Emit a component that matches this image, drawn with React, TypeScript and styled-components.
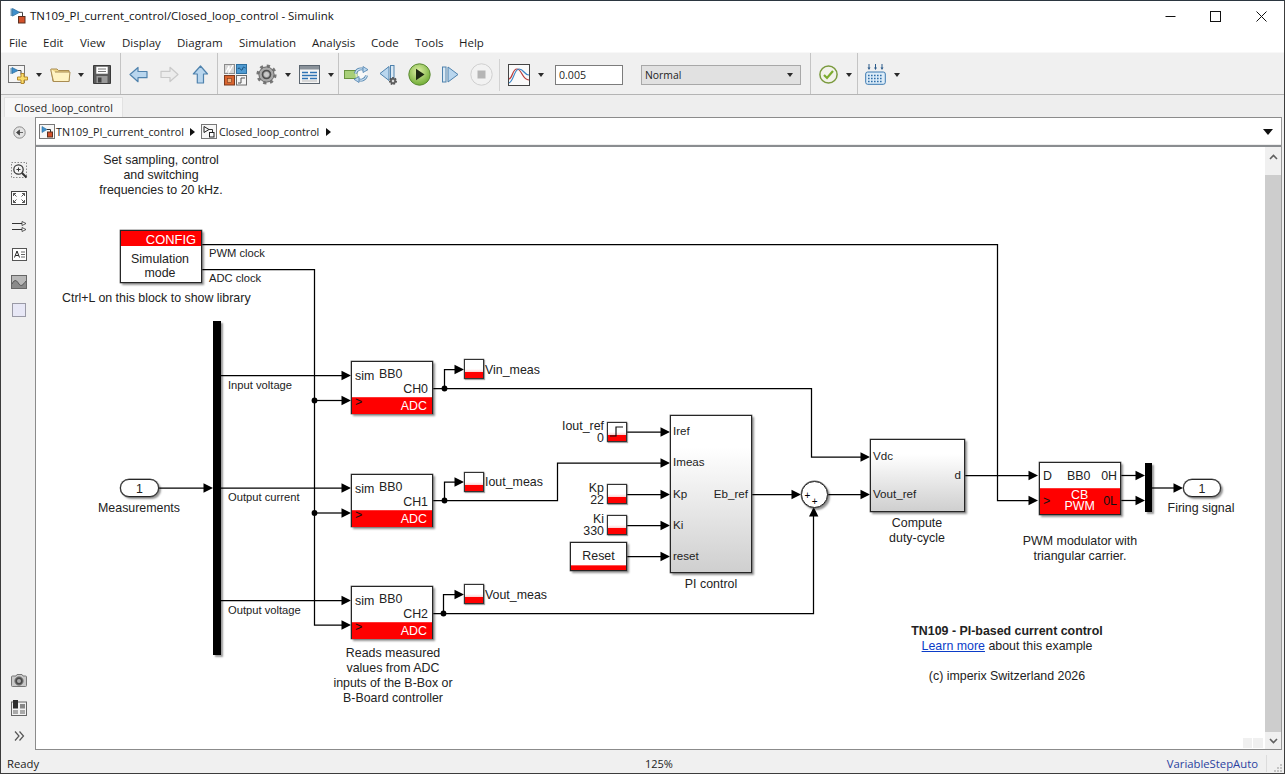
import React from "react";
import styled, { createGlobalStyle, css } from "styled-components";

const OX = 36;
const OY = 147;

const Global = createGlobalStyle`
  html, body { margin: 0; padding: 0; background: #fff; }
  * { box-sizing: border-box; }
`;

const uiFont = `"Open Sans", "Noto Sans", sans-serif`;
const diagramFont = `"Liberation Sans", Arial, sans-serif`;

const Window = styled.div`
  width: 1285px;
  height: 774px;
  display: flex;
  flex-direction: column;
  overflow: hidden;
  background: #f0f0f0;
  border: 1px solid #3c3c3c;
  border-top-color: #2b3640;
  font-family: ${uiFont};
  color: #1a1a1a;
`;

const TitleBar = styled.div`
  height: 30px;
  flex: none;
  display: flex;
  align-items: center;
  background: #fff;
  padding-left: 9px;
`;
const TitleText = styled.span`
  font-size: 11.44px;
  margin-left: 4px;
  margin-top: -1px;
  color: #111;
  white-space: nowrap;
`;
const WinControls = styled.div`
  margin-left: auto;
  display: flex;
  height: 100%;
`;
const WinControl = styled.div`
  width: 45.5px;
  display: flex;
  align-items: center;
  justify-content: center;
`;

const MenuBar = styled.div`
  height: 21px;
  flex: none;
  display: flex;
  align-items: center;
  background: #fff;
  padding: 1px 0 0 8px;
`;
const MenuItem = styled.span<{ $w: number }>`
  width: ${(p) => p.$w}px;
  font-size: 11.5px;
  color: #1c1c1c;
`;

const ToolBar = styled.div`
  height: 43px;
  flex: none;
  display: flex;
  align-items: center;
  background: #f0f0f0;
  border-top: 1px solid #f8f8f8;
  border-bottom: 1px solid #b4b4b4;
`;
const ToolGroup = styled.div<{ $w: number; $open?: boolean }>`
  width: ${(p) => p.$w}px;
  height: 100%;
  flex: none;
  display: flex;
  align-items: center;
  padding-top: 2px;
  border-right: 1px solid ${(p) => (p.$open ? "transparent" : "#c4c4c4")};
`;
const ToolSlot = styled.span<{ $ml: number }>`
  display: inline-flex;
  flex: none;
  margin-left: ${(p) => p.$ml}px;
`;
const Caret = styled.span<{ $ml?: number }>`
  flex: none;
  width: 0;
  height: 0;
  margin-left: ${(p) => p.$ml ?? 8}px;
  border-left: 3.5px solid transparent;
  border-right: 3.5px solid transparent;
  border-top: 4px solid #2a2a2a;
`;
const InnerDivider = styled.span<{ $ml: number }>`
  flex: none;
  width: 1px;
  height: 32px;
  margin-left: ${(p) => p.$ml}px;
  background: #d2d2d2;
`;
const StepInput = styled.div`
  flex: none;
  width: 68px;
  height: 20px;
  margin-left: 11px;
  padding-left: 3px;
  border: 1px solid #7c7c7c;
  background: #fff;
  font-size: 10.6px;
  line-height: 18px;
  color: #222;
`;
const ModeCombo = styled.div`
  flex: none;
  width: 160px;
  height: 20px;
  margin-left: 18px;
  padding: 0 7px 0 3px;
  display: flex;
  align-items: center;
  justify-content: space-between;
  border: 1px solid #a8a8a8;
  background: #e1e1e1;
  font-size: 10.4px;
  color: #222;
`;

const TabStrip = styled.div`
  height: 22px;
  flex: none;
  padding: 2px 0 0 3px;
  background: #eeeeee;
`;
const Tab = styled.div`
  width: 119px;
  height: 20px;
  background: #f7f7f7;
  border: 1px solid #e2e2e2;
  border-bottom: none;
  text-align: center;
  font-size: 10.5px;
  line-height: 20px;
  color: #222;
`;

const Main = styled.div`
  flex: 1;
  min-height: 0;
  display: flex;
  background: #f0f0f0;
`;
const SideBar = styled.div`
  width: 34px;
  flex: none;
  display: flex;
  flex-direction: column;
  padding-top: 1px;
`;
const SideButton = styled.div<{ $mt?: string }>`
  height: 28px;
  flex: none;
  display: flex;
  align-items: center;
  justify-content: center;
  margin-top: ${(p) => p.$mt ?? "0"};
  padding-left: 2px;
`;
const Frame = styled.div`
  flex: 1;
  min-width: 0;
  margin-right: 2px;
  display: flex;
  flex-direction: column;
  border: 1px solid #8b8b8b;
  border-right-color: #9a9a9a;
  background: #fff;
`;
const Breadcrumb = styled.div`
  height: 29px;
  flex: none;
  display: flex;
  align-items: center;
  padding: 0 4px 0 3px;
  background: #fff;
  border-bottom: 2px solid #8a8d90;
  box-shadow: inset 0 -1px 0 #eeeeee;
`;
const CrumbText = styled.span<{ $ml: number }>`
  font-size: 10.7px;
  color: #222;
  margin-left: ${(p) => p.$ml}px;
  white-space: nowrap;
`;
const CrumbArrow = styled.span<{ $ml: number }>`
  flex: none;
  width: 0;
  height: 0;
  margin-left: ${(p) => p.$ml}px;
  border-top: 4.5px solid transparent;
  border-bottom: 4.5px solid transparent;
  border-left: 5px solid #111;
`;
const CrumbMenu = styled.span`
  flex: none;
  margin-left: auto;
  margin-right: 4px;
  width: 0;
  height: 0;
  border-left: 5px solid transparent;
  border-right: 5px solid transparent;
  border-top: 6px solid #111;
`;

const Workspace = styled.div`
  flex: 1;
  min-height: 0;
  display: flex;
`;
const Canvas = styled.div`
  position: relative;
  flex: 1;
  min-width: 0;
  overflow: hidden;
  background: #fff;
  font-family: ${diagramFont};
  color: #222;
`;
const Wires = styled.svg`
  position: absolute;
  inset: 0;
  width: 100%;
  height: 100%;
`;
const ScrollBar = styled.div`
  width: 16px;
  flex: none;
  display: flex;
  flex-direction: column;
  background: #f0f0f0;
`;
const ScrollButton = styled.div<{ $h: number; $pb?: number }>`
  height: ${(p) => p.$h}px;
  padding-bottom: ${(p) => p.$pb ?? 0}px;
  flex: none;
  display: flex;
  align-items: center;
  justify-content: center;
`;
const ScrollThumb = styled.div`
  flex: 1;
  background: #cdcdcd;
`;
const HScrollGhost = styled.div<{ $x: number; $y: number; $w: number; $h: number }>`
  position: absolute;
  left: ${(p) => p.$x - OX}px;
  top: ${(p) => p.$y - OY}px;
  width: ${(p) => p.$w}px;
  height: ${(p) => p.$h}px;
  background: #f0f0f0;
`;

const StatusBar = styled.div`
  height: 23px;
  flex: none;
  position: relative;
  display: flex;
  align-items: center;
  padding: 3px 0 0 6px;
  font-size: 11.3px;
  color: #222;
  background: #f0f0f0;
`;
const StatusZoom = styled.span`
  position: absolute;
  left: 644px;
  font-size: 11px;
`;
const StatusSolver = styled.span`
  margin-left: auto;
  margin-right: 8px;
  color: #2a3f9f;
  font-size: 11.3px;
`;
const StatusCell = styled.span`
  width: 18px;
  height: 17px;
  display: flex;
  align-items: flex-end;
  justify-content: flex-end;
  border-left: 1px solid #dcdcdc;
  padding: 0 2px 0 0;
`;

/* ---------- diagram ---------- */
const placed = css<{ $x: number; $y: number; $w?: number; $h?: number }>`
  position: absolute;
  left: ${(p) => p.$x - OX}px;
  top: ${(p) => p.$y - OY}px;
  ${(p) => (p.$w !== undefined ? `width: ${p.$w}px;` : "")}
  ${(p) => (p.$h !== undefined ? `height: ${p.$h}px;` : "")}
`;
const blockEdge = css`
  border: 1px solid #262626;
  box-shadow: 0 0 0 0.4px #666, 2px 2px 2px rgba(0, 0, 0, 0.42);
`;

type Anchor = "start" | "middle" | "end";
const Label = styled.div<{ $x: number; $y: number; $anchor?: Anchor; $small?: boolean; $bold?: boolean; $tight?: boolean }>`
  ${placed}
  font-size: ${(p) => (p.$small ? 11.2 : 12.4)}px;
  line-height: ${(p) => (p.$tight ? 11.6 : p.$small ? 13 : 15)}px;
  font-weight: ${(p) => (p.$bold ? 700 : 400)};
  white-space: pre;
  text-align: ${(p) => (p.$anchor === "middle" ? "center" : p.$anchor === "end" ? "right" : "left")};
  transform: translateX(${(p) => (p.$anchor === "middle" ? "-50%" : p.$anchor === "end" ? "-100%" : "0")});
`;
const LearnLink = styled.a`
  color: #0b3cc8;
  text-decoration: underline;
`;

const ConfigBlock = styled.div`
  ${placed}
  ${blockEdge}
  display: flex;
  flex-direction: column;
  background: #fff;
  font-size: 12.4px;
`;
const ConfigHead = styled.div`
  height: 15px;
  flex: none;
  background: #ff0000;
  color: #fff;
  text-align: right;
  padding-right: 5px;
  font-size: 12.9px;
  line-height: 17px;
`;
const ConfigBody = styled.div`
  flex: 1;
  text-align: center;
  padding: 6px 2px 0 0;
  line-height: 14px;
  color: #222;
`;

const AdcBlock = styled.div`
  ${placed}
  ${blockEdge}
  display: flex;
  flex-direction: column;
  background: #fff;
  font-size: 12.4px;
`;
const AdcTop = styled.div`
  height: 35px;
  flex: none;
  display: grid;
  grid-template-columns: 24px 1fr;
  grid-template-rows: 15px 14px;
  padding: 5px 4px 0 3px;
  line-height: 14px;
`;
const AdcSim = styled.span`
  padding-top: 2px;
`;
const AdcBoard = styled.span`
  padding-top: 0;
`;
const AdcChannel = styled.span`
  grid-column: 1 / 3;
  text-align: right;
`;
const AdcBottom = styled.div`
  flex: 1;
  display: flex;
  justify-content: space-between;
  padding: 1px 5px 0 3px;
  background: linear-gradient(#ff5050 0, #ff0000 1.5px);
  line-height: 16px;
  color: #fff;
`;
const ClockMark = styled.span`
  color: #111;
  font-size: 12.4px;
  line-height: 9px;
`;

const Display = styled.div`
  ${placed}
  width: 20px;
  height: 20px;
  border: 1px solid #333;
  box-shadow: 0 0 0 0.3px #777, 1px 1px 1px rgba(0, 0, 0, 0.3);
  background: linear-gradient(#fff 0, #fff 50%, #fcd6d6 65%, #ff0000 68%, #ff0000 100%);
`;
const StepGlyph = styled.svg`
  display: block;
  width: 18px;
  height: 18px;
`;
const ResetButton = styled.div`
  ${placed}
  ${blockEdge}
  text-align: center;
  font-size: 12.4px;
  line-height: 26px;
  background: linear-gradient(#fff 0, #fff 82%, #ff0000 84%, #ff0000 100%);
`;
const Subsystem = styled.div`
  ${placed}
  ${blockEdge}
  background: linear-gradient(#ffffff 20%, #cfcfcf 100%);
  font-size: 12.4px;
`;
const PortText = styled.span<{ $y: number; $right?: boolean }>`
  position: absolute;
  top: ${(p) => p.$y}px;
  ${(p) => (p.$right ? "right: 3px;" : "left: 2px;")}
  font-size: 11.6px;
  line-height: 14px;
  white-space: nowrap;
`;
const SumBlock = styled.div`
  ${placed}
  ${blockEdge}
  width: 27px;
  height: 27px;
  border-radius: 50%;
  background: #fff;
`;
const SumSign = styled.span<{ $l: number; $t: number }>`
  position: absolute;
  left: ${(p) => p.$l}px;
  top: ${(p) => p.$t}px;
  font-size: 10px;
  line-height: 9px;
  color: #000;
`;
const MuxBar = styled.div`
  ${placed}
  background: #000;
  box-shadow: 2px 2px 2px rgba(0, 0, 0, 0.4);
`;
const Port = styled.div`
  ${placed}
  ${blockEdge}
  border-radius: 9px;
  background: #fff;
  text-align: center;
  font-size: 12.4px;
  line-height: 18px;
`;
const PwmBlock = styled.div`
  ${placed}
  ${blockEdge}
  display: flex;
  flex-direction: column;
  background: #fff;
  font-size: 12.4px;
`;
const PwmTop = styled.div`
  height: 25px;
  flex: none;
  display: flex;
  align-items: center;
  padding: 1px 3px 0 3px;
`;
const PwmBoard = styled.span`
  margin-left: 15px;
`;
const PwmOut = styled.span`
  margin-left: auto;
`;
const PwmBottom = styled.div`
  flex: 1;
  display: flex;
  align-items: center;
  padding: 0 3px 0 3px;
  background: linear-gradient(#ff5050 0, #ff0000 1.5px);
  color: #fff;
`;
const PwmClock = styled.span`
  width: 13px;
  flex: none;
  font-size: 12.4px;
  color: #111;
`;
const PwmTitle = styled.span`
  flex: 1;
  text-align: center;
  line-height: 11px;
  white-space: pre;
`;
const PwmLow = styled.span`
  flex: none;
  color: #111;
`;

/* ---------- icons ---------- */
const ModelGlyph = () => (
  <svg width="16" height="17" viewBox="0 0 16 17">
    <path d="M1.2 0.5v7.5" stroke="#2c6f9f" strokeWidth="1" />
    <path d="M2.5 0.5l7 3.8-7 3.8z" fill="#3f8fcc" stroke="#2c6f9f" strokeWidth="0.8" />
    <path d="M9 4.3h3.5V9" fill="none" stroke="#444" strokeWidth="1" />
    <rect x="8.5" y="8.5" width="6.5" height="6.5" fill="#d4512a" stroke="#5b3020" />
  </svg>
);
const CrumbModel = () => (
  <svg width="16" height="15" viewBox="0 0 16 15">
    <rect x="0.5" y="0.5" width="15" height="14" fill="#f7f7f7" stroke="#777" />
    <path d="M3 2.5l5 3-5 3z" fill="#3f8fcc" stroke="#2c6f9f" strokeWidth="0.6" />
    <path d="M8 5.5h3.5v3" fill="none" stroke="#333" />
    <rect x="8.5" y="8" width="5" height="5" fill="#d4512a" stroke="#5b3020" />
  </svg>
);
const CrumbSub = () => (
  <svg width="16" height="15" viewBox="0 0 16 15">
    <rect x="0.5" y="0.5" width="15" height="14" fill="#f7f7f7" stroke="#777" />
    <path d="M3 2.5l5 3-5 3z" fill="none" stroke="#222" />
    <path d="M8 5.5h3.5v3" fill="none" stroke="#333" />
    <rect x="8.5" y="8.5" width="4.5" height="4.5" fill="#fff" stroke="#222" />
  </svg>
);
const NewIcon = () => (
  <svg width="21" height="21" viewBox="0 0 21 21">
    <rect x="0.5" y="1.5" width="16" height="17" fill="#f5f5f5" stroke="#757575" />
    <path d="M3 4v6M4 3.5l6 3-6 3z" fill="#3f8fcc" stroke="#2c6f9f" strokeWidth="0.8" />
    <path d="M10 6.5h3v4" fill="none" stroke="#444" />
    <path d="M13 9.5h3v3.5h3.5v3H16v3.5h-3V16H9.5v-3H13z" fill="#f9dc6a" stroke="#b7892a" />
  </svg>
);
const FolderIcon = () => (
  <svg width="21" height="16" viewBox="0 0 21 16">
    <path d="M1 2h6l1.5 1.5H19V14.5H3z" fill="#f0d88a" stroke="#a98c52" />
    <path d="M1 2v2l2.5 10.5H19L20 5H5" fill="#fff3c2" stroke="#a98c52" />
  </svg>
);
const SaveIcon = () => (
  <svg width="18" height="19" viewBox="0 0 18 19">
    <path d="M0.5 0.5h17v18h-17z" fill="#5a5a5a" stroke="#3a3a3a" />
    <rect x="3" y="1.5" width="12" height="7.5" fill="#fff" stroke="#6a6a6a" strokeWidth="0.6" />
    <path d="M5 4h8M5 6.5h8" stroke="#777" />
    <rect x="3.5" y="11" width="11" height="7" fill="#9a9a9a" />
    <rect x="5" y="12.5" width="3.5" height="5" fill="#444" />
  </svg>
);
const ArrowIcon = ({ dir, off }: { dir: "left" | "right" | "up"; off?: boolean }) => {
  const fill = off ? "#ececec" : "#b9d6ee";
  const stroke = off ? "#c9c9c9" : "#4f82ad";
  const r = dir === "left" ? 0 : dir === "right" ? 180 : 90;
  return (
    <svg width="19" height="19" viewBox="0 0 19 19">
      <path
        transform={`rotate(${r} 9.5 9.5)`}
        d="M1 9.5L9 2.5v4h9v6.2H9v4z"
        fill={fill}
        stroke={stroke}
        strokeWidth="1.2"
        strokeLinejoin="round"
      />
    </svg>
  );
};
const LibraryIcon = () => (
  <svg width="23" height="23" viewBox="0 0 23 23">
    <rect x="0.5" y="1.5" width="10" height="9" fill="#d6d6d6" stroke="#8a8a8a" />
    <path d="M2 9L5 3v6l4-7" fill="none" stroke="#fff" strokeWidth="1.2" />
    <rect x="12.5" y="1.5" width="10" height="9" fill="#4f9ad1" stroke="#2d6f9f" />
    <path d="M14 6c1.5-4 3 4 4.5 0s1.5-1 3-1" fill="none" stroke="#174f7c" />
    <rect x="0.5" y="12.5" width="10" height="9.5" fill="#d9642f" stroke="#7b3a1f" />
    <rect x="3.5" y="15.5" width="4" height="4" fill="#f0b07a" stroke="#7b3a1f" strokeWidth="0.6" />
    <rect x="12.5" y="12.5" width="10" height="9.5" fill="#f5f5f5" stroke="#6a6a6a" />
    <path d="M14 20h3v-5h4" fill="none" stroke="#555" />
  </svg>
);
const GearIcon = () => (
  <svg width="21" height="21" viewBox="0 0 21 21">
    <circle cx="10.5" cy="10.5" r="8.6" fill="none" stroke="#777" strokeWidth="3" strokeDasharray="3.2 3.55" />
    <circle cx="10.5" cy="10.5" r="7.6" fill="#a9a9a9" stroke="#666" />
    <circle cx="10.5" cy="10.5" r="4.8" fill="#4f4f4f" />
    <circle cx="10.5" cy="10.5" r="3" fill="#c9c9c9" stroke="#888" strokeWidth="0.6" />
  </svg>
);
const ExplorerIcon = () => (
  <svg width="21" height="19" viewBox="0 0 21 19">
    <rect x="0.5" y="0.5" width="20" height="18" fill="#f4f4f4" stroke="#5c6670" />
    <rect x="1" y="1" width="19" height="3.5" fill="#8a929a" />
    <path d="M3 7.5h6M11 7.5h7M3 10.5h15M3 13.5h6M11 13.5h7" stroke="#2f73b4" strokeWidth="1.4" />
    <path d="M3 16h15" stroke="#bbb" />
  </svg>
);
const LoopIcon = () => (
  <svg width="25" height="19" viewBox="0 0 25 19">
    <rect x="0.5" y="5.5" width="13" height="8" fill="#a8cf78" stroke="#6a9440" />
    <circle cx="17" cy="9.5" r="5.8" fill="#fff" fillOpacity="0.55" />
    <path d="M11.5 8.5a5.8 5.8 0 0 1 9.5-3.2" fill="none" stroke="#4f82ad" strokeWidth="2.8" />
    <path d="M22.5 10.5a5.8 5.8 0 0 1-9.5 3.2" fill="none" stroke="#4f82ad" strokeWidth="2.8" />
    <path d="M11.5 8.5a5.8 5.8 0 0 1 9.5-3.2" fill="none" stroke="#cfe3f3" strokeWidth="1.2" />
    <path d="M22.5 10.5a5.8 5.8 0 0 1-9.5 3.2" fill="none" stroke="#cfe3f3" strokeWidth="1.2" />
    <path d="M19 1.5l5 3.2-5 2.8zM15 17.5l-5-3.2 5-2.8z" fill="#b9d6ee" stroke="#4f82ad" strokeWidth="0.8" />
  </svg>
);
const StepBackIcon = () => (
  <svg width="19" height="22" viewBox="0 0 19 22">
    <path d="M1 9.5L10 2.5v14z" fill="#b9d6ee" stroke="#4f82ad" strokeLinejoin="round" />
    <rect x="11.5" y="1.5" width="3.5" height="13" fill="#dbe9f4" stroke="#4f82ad" />
    <circle cx="14" cy="17" r="3" fill="#666" stroke="#555" strokeWidth="2" strokeDasharray="1.6 1" />
    <circle cx="14" cy="17" r="1.2" fill="#ddd" />
  </svg>
);
const PlayIcon = () => (
  <svg width="23" height="23" viewBox="0 0 23 23">
    <defs>
      <radialGradient id="pg" cx="45%" cy="35%" r="70%">
        <stop offset="0" stopColor="#dff0a8" />
        <stop offset="1" stopColor="#68a82c" />
      </radialGradient>
    </defs>
    <circle cx="11.5" cy="11.5" r="10.7" fill="url(#pg)" stroke="#5c8a35" />
    <path d="M8 5.8l8.5 5.7-8.5 5.7z" fill="#1e2a14" />
  </svg>
);
const StepForwardIcon = () => (
  <svg width="17" height="17" viewBox="0 0 17 17">
    <rect x="0.5" y="1" width="3.5" height="15" fill="#dbe9f4" stroke="#4f82ad" />
    <path d="M6 1l10 7.5L6 16z" fill="#b9d6ee" stroke="#4f82ad" strokeLinejoin="round" />
  </svg>
);
const StopIcon = () => (
  <svg width="23" height="23" viewBox="0 0 23 23">
    <circle cx="11.5" cy="11.5" r="10.7" fill="#f2f2f2" stroke="#cfcfcf" />
    <rect x="7.5" y="7.5" width="8" height="8" fill="#b5b5b5" />
  </svg>
);
const ScopeIcon = () => (
  <svg width="23" height="22" viewBox="0 0 23 22">
    <rect x="0.5" y="0.5" width="21" height="21" fill="#fafafa" stroke="#444" />
    <path d="M1 15c4-1 3-10 8-10s5 11 12 11" fill="none" stroke="#b83a3a" strokeWidth="1.2" />
    <path d="M1 19c5-2 5-14 10-14s5 6 10 6" fill="none" stroke="#3b84c4" strokeWidth="1.2" />
  </svg>
);
const CheckIcon = () => (
  <svg width="19" height="19" viewBox="0 0 19 19">
    <circle cx="9.5" cy="9.5" r="8.6" fill="#f2f2ea" stroke="#7a9a3e" strokeWidth="1.5" />
    <path d="M5 10l3 3 6-7" fill="none" stroke="#7cac2e" strokeWidth="2.2" />
  </svg>
);
const KeyGridIcon = () => (
  <svg width="21" height="21" viewBox="0 0 21 21">
    <path d="M4 0v4M10.5 0v4M17 0v4" stroke="#2a5a8a" />
    <path d="M2.5 3.5h3L4 6zM9 3.5h3L10.5 6zM15.5 3.5h3L17 6z" fill="#2a5a8a" />
    <rect x="0.7" y="8" width="19.6" height="12.3" rx="2" fill="#dcecf8" stroke="#3a78b0" />
    <path d="M3 11.5h15M3 14.5h15M3 17.5h15" stroke="#2f6ea8" strokeWidth="1.5" strokeDasharray="1.6 1.4" />
  </svg>
);
const BackCircle = () => (
  <svg width="13" height="13" viewBox="0 0 13 13">
    <circle cx="6.5" cy="6.5" r="5.7" fill="#e4e4e4" stroke="#8a8a8a" />
    <path d="M10 6.5H6M6.5 4L3.5 6.5 6.5 9z" fill="#444" stroke="#444" strokeWidth="0.8" />
  </svg>
);
const ZoomIcon = () => (
  <svg width="17" height="17" viewBox="0 0 17 17">
    <rect x="0.5" y="0.5" width="15" height="15" fill="none" stroke="#888" strokeDasharray="1.5 1.5" />
    <circle cx="7.5" cy="7.5" r="4.7" fill="#f4f4f4" stroke="#333" strokeWidth="1.2" />
    <path d="M5.5 7.5h4M7.5 5.5v4" stroke="#333" />
    <path d="M11 11l4.5 4.5" stroke="#333" strokeWidth="2" />
  </svg>
);
const FitIcon = () => (
  <svg width="16" height="14" viewBox="0 0 16 14">
    <rect x="0.5" y="0.5" width="15" height="13" fill="#fff" stroke="#444" />
    <path d="M2.5 2.5l3 3M2.5 2.5h2.5M2.5 2.5V5M13.5 2.5l-3 3M13.5 2.5H11M13.5 2.5V5M2.5 11.5l3-3M2.5 11.5H5M2.5 11.5V9M13.5 11.5l-3-3M13.5 11.5H11M13.5 11.5V9" stroke="#444" fill="none" strokeWidth="0.9" />
  </svg>
);
const RouteIcon = () => (
  <svg width="15" height="11" viewBox="0 0 15 11">
    <path d="M0 2.5h10M0 8.5h10" stroke="#333" />
    <path d="M10 0.5l4 2-4 2zM10 6.5l4 2-4 2z" fill="#fff" stroke="#333" strokeWidth="0.8" />
  </svg>
);
const AnnotIcon = () => (
  <svg width="15" height="13" viewBox="0 0 15 13">
    <rect x="0.5" y="0.5" width="14" height="12" fill="#fff" stroke="#555" />
    <path d="M2.5 9.5L5 3l2.5 6.5M3.5 7.5h3" fill="none" stroke="#222" strokeWidth="1" />
    <path d="M9 4h4M9 6.5h4M9 9h4" stroke="#666" />
  </svg>
);
const ImageIcon = () => (
  <svg width="16" height="14" viewBox="0 0 16 14">
    <rect x="0.5" y="0.5" width="15" height="13" fill="#b8b8b8" stroke="#666" />
    <path d="M1 9c3-6 5-3 7 0s4 1 7-3v7H1z" fill="#8a8a8a" />
    <path d="M1 9c3-6 5-3 7 0s4 1 7-3" fill="none" stroke="#555" />
  </svg>
);
const AreaIcon = () => (
  <svg width="14" height="14" viewBox="0 0 14 14">
    <rect x="0.5" y="0.5" width="13" height="13" fill="#e8e8f6" stroke="#9a9aa6" />
  </svg>
);
const CameraIcon = () => (
  <svg width="16" height="13" viewBox="0 0 16 13">
    <path d="M2 2h3l1-1.5h5L12 2h2.5a1 1 0 011 1v8.5a1 1 0 01-1 1h-13a1 1 0 01-1-1V3a1 1 0 011-1z" fill="#c9c9c9" stroke="#777" />
    <circle cx="8" cy="7" r="4.2" fill="#4a4a4a" stroke="#888" />
    <circle cx="8" cy="7" r="2" fill="#aaa" />
  </svg>
);
const PanelIcon = () => (
  <svg width="16" height="16" viewBox="0 0 16 16">
    <rect x="0.5" y="2" width="15" height="13.5" fill="#f2f2f2" stroke="#666" />
    <rect x="9" y="4" width="5" height="4.5" fill="#888" />
    <rect x="9" y="10" width="5" height="4" fill="#aaa" />
    <rect x="2" y="10" width="5" height="4" fill="#aaa" />
    <rect x="2" y="0" width="5" height="8.5" fill="#2d2d2d" />
  </svg>
);
const MoreIcon = () => (
  <svg width="11" height="10" viewBox="0 0 11 10">
    <path d="M1 0.5l4 4.5-4 4.5M5.5 0.5l4 4.5-4 4.5" fill="none" stroke="#555" strokeWidth="1.2" />
  </svg>
);

/* ---------- wire data (page coordinates) ---------- */
const wirePaths = [
  "M202 244.5H997.5V500.5H1030",
  "M202 269.5H314.5V625H343",
  "M314.5 400.5H343",
  "M314.5 513H343",
  "M221 375.5H343",
  "M221 488H343",
  "M221 600.5H343",
  "M158 488H205",
  "M433 388.5H811.5V457H862",
  "M444.5 388.5V369.5H456",
  "M433 500.5H557.5V463H662",
  "M444.5 500.5V482H456",
  "M433 613.5H813.5V516",
  "M443.5 613.5V594.5H456",
  "M627 432H662",
  "M627 494.5H662",
  "M627 525.5H662",
  "M627 556.5H662",
  "M752 494.5H793",
  "M827 494.5H862",
  "M965 475.5H1030",
  "M1120 475.5H1137",
  "M1120 500.5H1137",
  "M1152 488H1175",
];
const rightTips: [number, number][] = [
  [213, 488], [351, 375.5], [351, 400.5], [351, 488], [351, 513], [351, 600.5], [351, 625],
  [464, 369.5], [464, 482], [464, 594.5],
  [670, 432], [670, 463], [670, 494.5], [670, 525.5], [670, 556.5],
  [801, 494.5], [870, 457], [870, 494.5], [1038, 475.5], [1038, 500.5], [1145, 475.5], [1145, 500.5], [1183, 488],
];
const junctions: [number, number][] = [
  [314.5, 400.5], [314.5, 513], [444.5, 388.5], [444.5, 500.5], [443.5, 613.5],
];
const adcRows = [
  { y: 361, channel: "CH0" },
  { y: 474, channel: "CH1" },
  { y: 586, channel: "CH2" },
];

const DiagramWires = () => (
  <Wires viewBox={`${OX} ${OY} 1229 602`} preserveAspectRatio="xMinYMin meet">
    {wirePaths.map((d) => (
      <path key={d} d={d} fill="none" stroke="#000" strokeWidth="1.25" />
    ))}
    {rightTips.map(([x, y]) => (
      <path key={`${x}-${y}`} d={`M${x} ${y}l-9.5-4.7v9.4z`} fill="#000" />
    ))}
    <path d="M813.7 507l-4.7 9.5h9.4z" fill="#000" />
    {junctions.map(([x, y]) => (
      <circle key={`${x}-${y}`} cx={x} cy={y} r="2.9" fill="#000" />
    ))}
  </Wires>
);

const App = () => (
  <>
    <Global />
    <Window>
      <TitleBar>
        <ModelGlyph />
        <TitleText>TN109_PI_current_control/Closed_loop_control - Simulink</TitleText>
        <WinControls>
          <WinControl>
            <svg width="11" height="11" viewBox="0 0 11 11"><path d="M0.5 5.5h10" stroke="#111" /></svg>
          </WinControl>
          <WinControl>
            <svg width="11" height="11" viewBox="0 0 11 11"><rect x="0.5" y="0.5" width="10" height="10" fill="none" stroke="#111" /></svg>
          </WinControl>
          <WinControl>
            <svg width="11" height="11" viewBox="0 0 11 11"><path d="M0.5 0.5l10 10M10.5 0.5l-10 10" stroke="#111" /></svg>
          </WinControl>
        </WinControls>
      </TitleBar>

      <MenuBar>
        <MenuItem $w={34}>File</MenuItem>
        <MenuItem $w={37}>Edit</MenuItem>
        <MenuItem $w={42}>View</MenuItem>
        <MenuItem $w={55}>Display</MenuItem>
        <MenuItem $w={62}>Diagram</MenuItem>
        <MenuItem $w={73}>Simulation</MenuItem>
        <MenuItem $w={59}>Analysis</MenuItem>
        <MenuItem $w={44}>Code</MenuItem>
        <MenuItem $w={44}>Tools</MenuItem>
        <MenuItem $w={40}>Help</MenuItem>
      </MenuBar>

      <ToolBar>
        <ToolGroup $w={120}>
          <ToolSlot $ml={7}><NewIcon /></ToolSlot>
          <Caret $ml={7} />
          <ToolSlot $ml={8}><FolderIcon /></ToolSlot>
          <Caret $ml={7} />
          <ToolSlot $ml={9}><SaveIcon /></ToolSlot>
        </ToolGroup>
        <ToolGroup $w={97}>
          <ToolSlot $ml={8}><ArrowIcon dir="left" /></ToolSlot>
          <ToolSlot $ml={12}><ArrowIcon dir="right" off /></ToolSlot>
          <ToolSlot $ml={12}><ArrowIcon dir="up" /></ToolSlot>
        </ToolGroup>
        <ToolGroup $w={121}>
          <ToolSlot $ml={6}><LibraryIcon /></ToolSlot>
          <ToolSlot $ml={9}><GearIcon /></ToolSlot>
          <Caret />
          <ToolSlot $ml={8}><ExplorerIcon /></ToolSlot>
          <Caret />
        </ToolGroup>
        <ToolGroup $w={472}>
          <ToolSlot $ml={5}><LoopIcon /></ToolSlot>
          <ToolSlot $ml={10}><StepBackIcon /></ToolSlot>
          <ToolSlot $ml={10}><PlayIcon /></ToolSlot>
          <ToolSlot $ml={11}><StepForwardIcon /></ToolSlot>
          <ToolSlot $ml={11}><StopIcon /></ToolSlot>
          <InnerDivider $ml={6} />
          <ToolSlot $ml={8}><ScopeIcon /></ToolSlot>
          <Caret $ml={7} />
          <StepInput>0.005</StepInput>
          <ModeCombo>
            Normal
            <Caret $ml={0} />
          </ModeCombo>
        </ToolGroup>
        <ToolGroup $w={47}>
          <ToolSlot $ml={8}><CheckIcon /></ToolSlot>
          <Caret />
        </ToolGroup>
        <ToolGroup $w={60} $open>
          <ToolSlot $ml={7}><KeyGridIcon /></ToolSlot>
          <Caret />
        </ToolGroup>
      </ToolBar>

      <TabStrip>
        <Tab>Closed_loop_control</Tab>
      </TabStrip>

      <Main>
        <SideBar>
          <SideButton><BackCircle /></SideButton>
          <SideButton $mt="10px"><ZoomIcon /></SideButton>
          <SideButton><FitIcon /></SideButton>
          <SideButton><RouteIcon /></SideButton>
          <SideButton><AnnotIcon /></SideButton>
          <SideButton><ImageIcon /></SideButton>
          <SideButton><AreaIcon /></SideButton>
          <SideButton $mt="auto"><CameraIcon /></SideButton>
          <SideButton><PanelIcon /></SideButton>
          <SideButton><MoreIcon /></SideButton>
        </SideBar>
        <Frame>
          <Breadcrumb>
            <CrumbModel />
            <CrumbText $ml={1}>TN109_PI_current_control</CrumbText>
            <CrumbArrow $ml={6} />
            <ToolSlot $ml={6}><CrumbSub /></ToolSlot>
            <CrumbText $ml={2}>Closed_loop_control</CrumbText>
            <CrumbArrow $ml={7} />
            <CrumbMenu />
          </Breadcrumb>
          <Workspace>
            <Canvas>
              <DiagramWires />

              <Label $x={161} $y={153} $anchor="middle">{"Set sampling, control\nand switching\nfrequencies to 20 kHz."}</Label>
              <ConfigBlock $x={120} $y={230} $w={82} $h={53}>
                <ConfigHead>CONFIG</ConfigHead>
                <ConfigBody>Simulation<br />mode</ConfigBody>
              </ConfigBlock>
              <Label $x={209} $y={247} $small>PWM clock</Label>
              <Label $x={209} $y={272} $small>ADC clock</Label>
              <Label $x={62} $y={291}>Ctrl+L on this block to show library</Label>

              <MuxBar $x={213} $y={321} $w={8} $h={334} />
              <Label $x={228} $y={379} $small>Input voltage</Label>
              <Label $x={228} $y={491} $small>Output current</Label>
              <Label $x={228} $y={604} $small>Output voltage</Label>

              <Port $x={120} $y={479} $w={39} $h={18}>1</Port>
              <Label $x={139} $y={501} $anchor="middle">Measurements</Label>

              {adcRows.map((row) => (
                <AdcBlock key={row.channel} $x={351} $y={row.y} $w={82} $h={53}>
                  <AdcTop>
                    <AdcSim>sim</AdcSim>
                    <AdcBoard>BB0</AdcBoard>
                    <AdcChannel>{row.channel}</AdcChannel>
                  </AdcTop>
                  <AdcBottom>
                    <ClockMark>&gt;</ClockMark>
                    <span>ADC</span>
                  </AdcBottom>
                </AdcBlock>
              ))}

              <Display $x={464} $y={359} />
              <Label $x={485} $y={363}>Vin_meas</Label>
              <Display $x={464} $y={472} />
              <Label $x={485} $y={475}>Iout_meas</Label>
              <Display $x={464} $y={584} />
              <Label $x={485} $y={588}>Vout_meas</Label>
              <Label $x={393} $y={646} $anchor="middle">{"Reads measured\nvalues from ADC\ninputs of the B-Box or\nB-Board controller"}</Label>

              <Label $x={604} $y={421} $anchor="end" $tight>{"Iout_ref\n0"}</Label>
              <Display $x={607} $y={422}>
                <StepGlyph viewBox="0 0 18 18">
                  <path d="M2 13h6V4h7" fill="none" stroke="#111" strokeWidth="1.2" />
                </StepGlyph>
              </Display>
              <Label $x={604} $y={483} $anchor="end" $tight>{"Kp\n22"}</Label>
              <Display $x={607} $y={484} />
              <Label $x={604} $y={514} $anchor="end" $tight>{"Ki\n330"}</Label>
              <Display $x={607} $y={515} />
              <ResetButton $x={570} $y={542} $w={57} $h={29}>Reset</ResetButton>

              <Subsystem $x={670} $y={415} $w={82} $h={158}>
                <PortText $y={8}>Iref</PortText>
                <PortText $y={39}>Imeas</PortText>
                <PortText $y={71}>Kp</PortText>
                <PortText $y={102}>Ki</PortText>
                <PortText $y={133}>reset</PortText>
                <PortText $y={71} $right>Eb_ref</PortText>
              </Subsystem>
              <Label $x={711} $y={577} $anchor="middle">PI control</Label>

              <SumBlock $x={801} $y={481}>
                <SumSign $l={2.5} $t={8.5}>+</SumSign>
                <SumSign $l={9.8} $t={14.5}>+</SumSign>
              </SumBlock>

              <Subsystem $x={870} $y={439} $w={95} $h={73}>
                <PortText $y={9}>Vdc</PortText>
                <PortText $y={47}>Vout_ref</PortText>
                <PortText $y={28} $right>d</PortText>
              </Subsystem>
              <Label $x={917} $y={516} $anchor="middle">{"Compute\nduty-cycle"}</Label>

              <PwmBlock $x={1039} $y={462} $w={82} $h={53}>
                <PwmTop>
                  <span>D</span>
                  <PwmBoard>BB0</PwmBoard>
                  <PwmOut>0H</PwmOut>
                </PwmTop>
                <PwmBottom>
                  <PwmClock>&gt;</PwmClock>
                  <PwmTitle>{"CB\nPWM"}</PwmTitle>
                  <PwmLow>0L</PwmLow>
                </PwmBottom>
              </PwmBlock>
              <Label $x={1080} $y={534} $anchor="middle">{"PWM modulator with\ntriangular carrier."}</Label>

              <MuxBar $x={1145} $y={463} $w={7} $h={49} />
              <Port $x={1183} $y={479} $w={38} $h={18}>1</Port>
              <Label $x={1201} $y={501} $anchor="middle">Firing signal</Label>

              <Label $x={1007} $y={624} $anchor="middle" $bold>TN109 - PI-based current control</Label>
              <Label $x={1007} $y={639} $anchor="middle"><LearnLink>Learn more</LearnLink> about this example</Label>
              <Label $x={1007} $y={669} $anchor="middle">(c) imperix Switzerland 2026</Label>
              <HScrollGhost $x={1243} $y={738} $w={9} $h={10} />
              <HScrollGhost $x={1253} $y={738} $w={10} $h={10} />
            </Canvas>
            <ScrollBar>
              <ScrollButton $h={28} $pb={8}>
                <svg width="9" height="6" viewBox="0 0 9 6"><path d="M1 5l3.5-3.5L8 5" fill="none" stroke="#606060" strokeWidth="1.6" /></svg>
              </ScrollButton>
              <ScrollThumb />
              <ScrollButton $h={17}>
                <svg width="9" height="6" viewBox="0 0 9 6"><path d="M1 1l3.5 3.5L8 1" fill="none" stroke="#606060" strokeWidth="1.6" /></svg>
              </ScrollButton>
            </ScrollBar>
          </Workspace>
        </Frame>
      </Main>

      <StatusBar>
        Ready
        <StatusZoom>125%</StatusZoom>
        <StatusSolver>VariableStepAuto</StatusSolver>
        <StatusCell>
          <svg width="8" height="8" viewBox="0 0 8 8"><path d="M6 0h2v2H6zM3 3h2v2H3zM6 3h2v2H6zM0 6h2v2H0zM3 6h2v2H3zM6 6h2v2H6z" fill="#c4c4c4" /></svg>
        </StatusCell>
      </StatusBar>
    </Window>
  </>
);

export default App;
